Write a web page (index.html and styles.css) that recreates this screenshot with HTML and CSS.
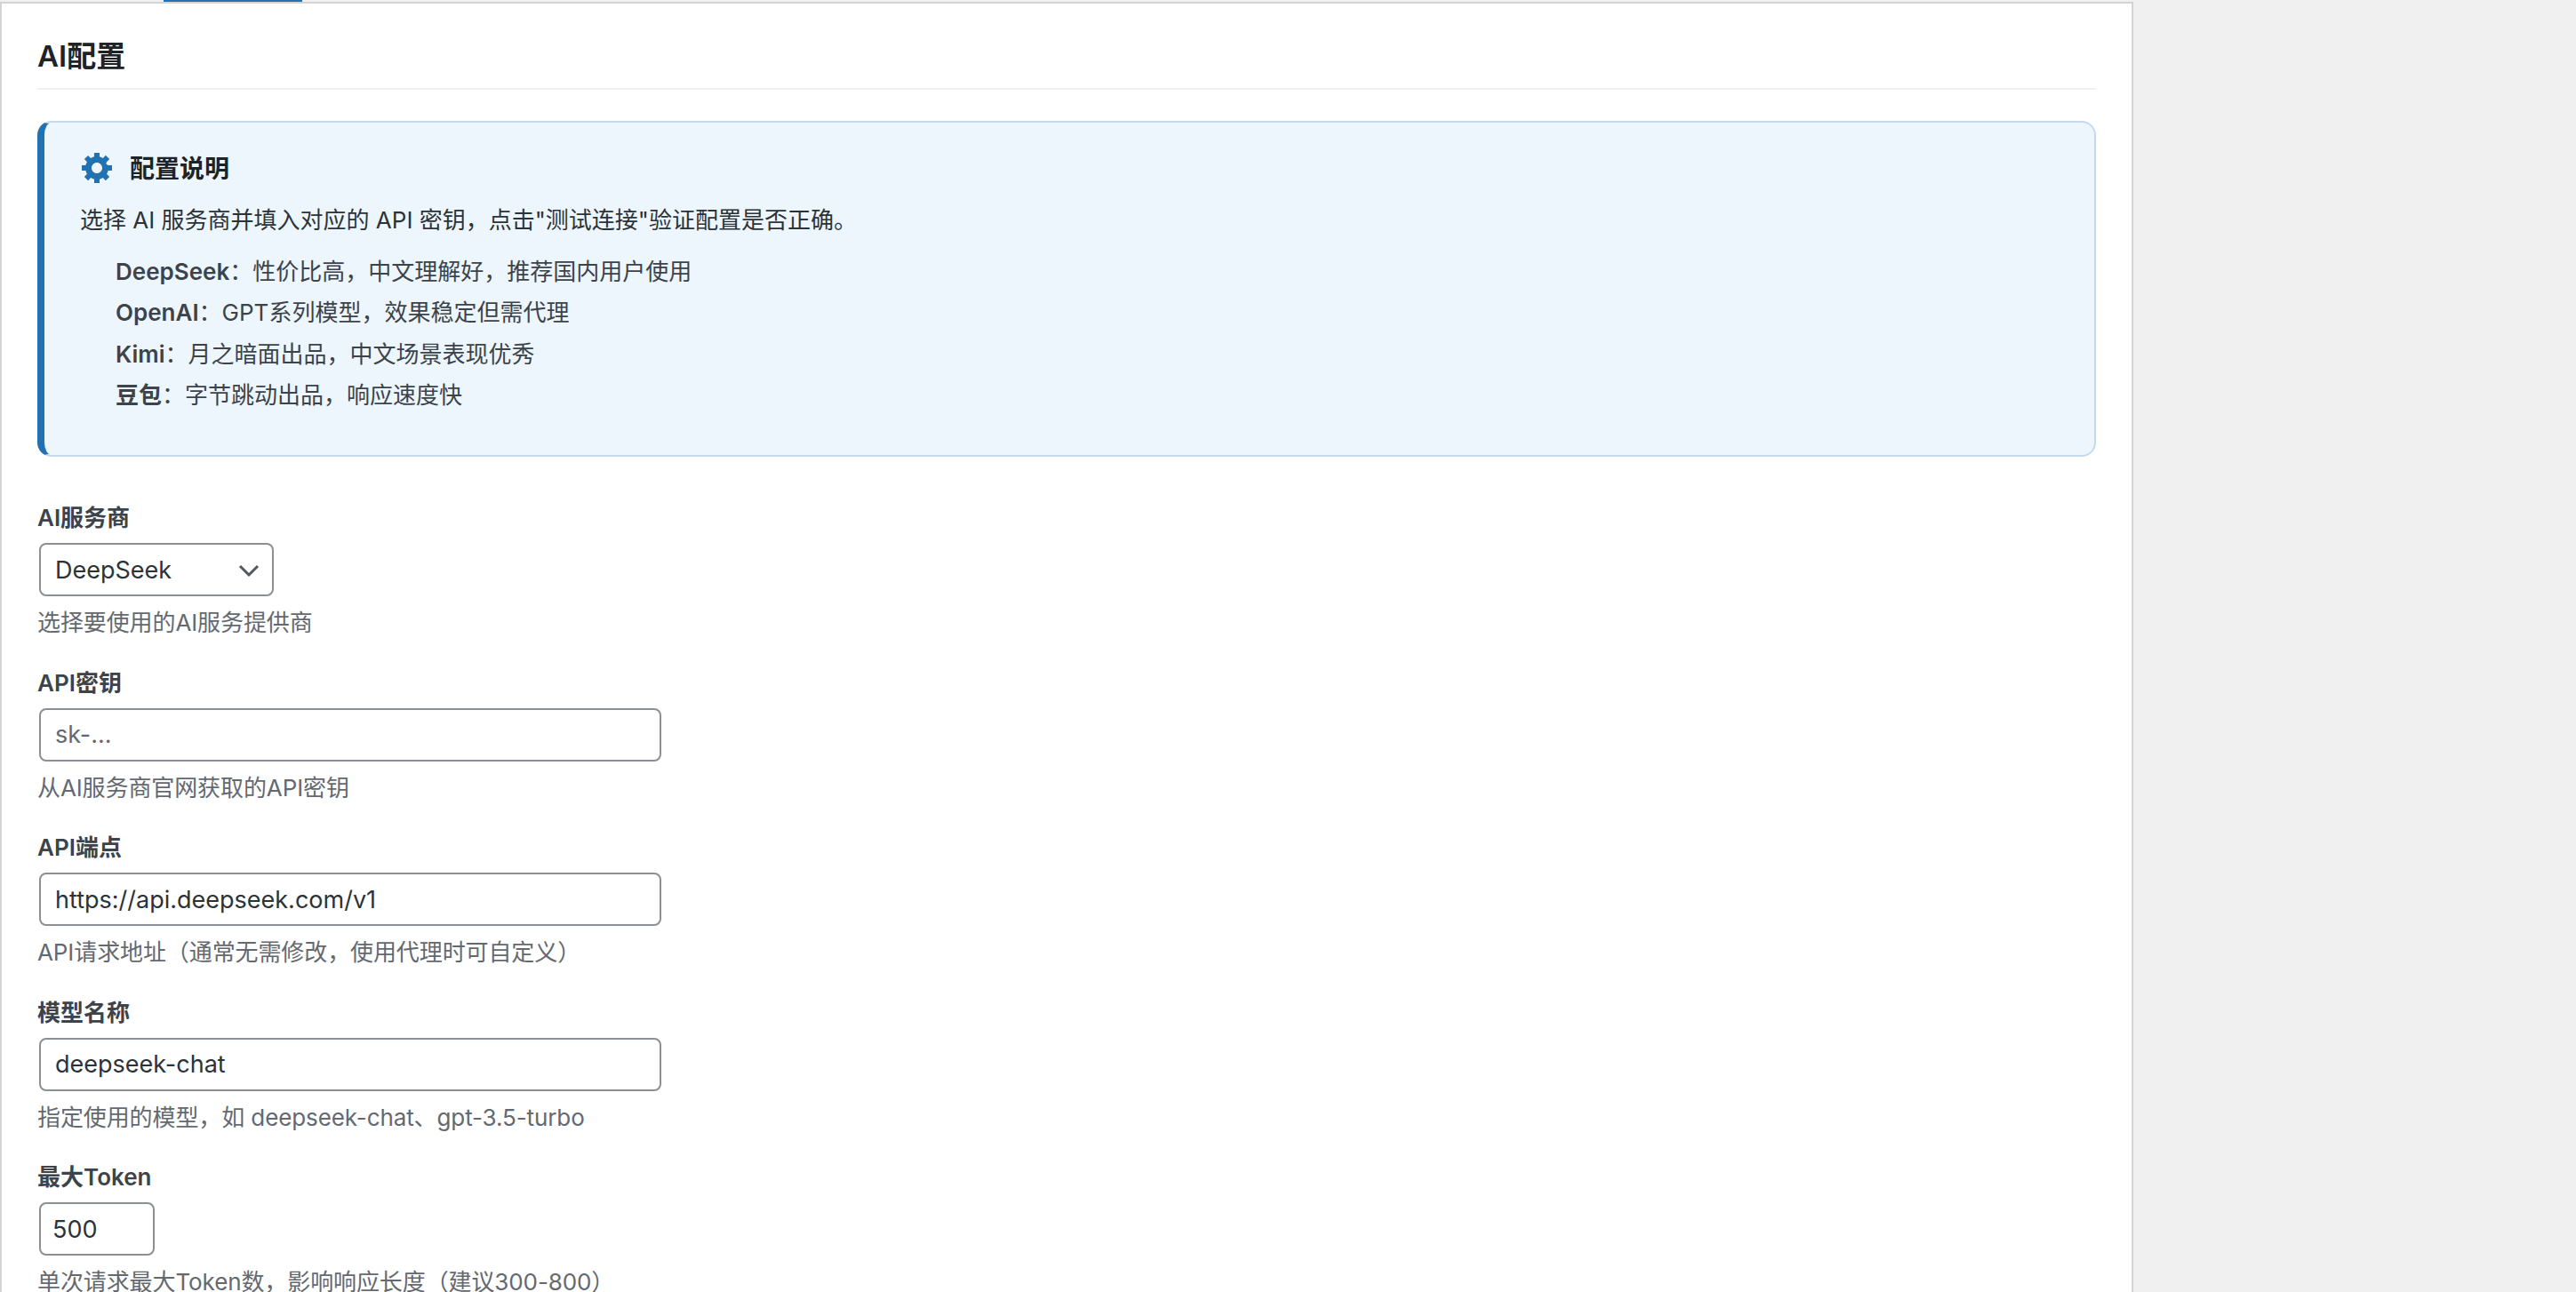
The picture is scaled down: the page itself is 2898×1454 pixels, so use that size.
FILE: index.html
```html
<!DOCTYPE html>
<html lang="zh-CN">
  <head>
    <meta charset="utf-8">
    <title>AI配置</title>
    <link rel="stylesheet" href="styles.css">
  </head>

  <body>
    <div class="tabs">
      <div class="tabactive"></div>
    </div>

    <div class="card">
      <h2 class="cardtitle">AI配置</h2>

      <div class="notice">
        <div class="noticehead">
          <svg class="noticeicon" viewBox="0 0 20 20">
            <path d="M18 12h-2.18c-.17.7-.44 1.35-.81 1.93l1.54 1.54-2.1 2.1-1.54-1.54c-.58.36-1.23.63-1.91.79V19H8v-2.18c-.68-.16-1.33-.43-1.91-.79l-1.54 1.54-2.12-2.12 1.54-1.54c-.36-.58-.63-1.23-.79-1.91H1V9.03h2.17c.16-.7.44-1.35.8-1.94L2.43 5.55l2.1-2.1 1.54 1.54c.58-.37 1.24-.64 1.93-.81V2h3v2.18c.68.16 1.33.43 1.91.79l1.54-1.54 2.12 2.12-1.54 1.54c-.36.59-.64 1.24.8 1.94H18V12zm-8.5 1.5c1.66 0 3-1.34 3-3s-1.34-3-3-3-3 1.34-3 3 1.34 3 3 3z"/>
          </svg>
          <span>配置说明</span>
        </div>
        <p class="noticetext">选择 AI 服务商并填入对应的 API 密钥，点击"测试连接"验证配置是否正确。</p>
        <ul class="noticelist">
          <li><strong>DeepSeek</strong>：性价比高，中文理解好，推荐国内用户使用</li>
          <li><strong>OpenAI</strong>：GPT系列模型，效果稳定但需代理</li>
          <li><strong>Kimi</strong>：月之暗面出品，中文场景表现优秀</li>
          <li><strong>豆包</strong>：字节跳动出品，响应速度快</li>
        </ul>
      </div>

      <div class="field">
        <label class="fieldlabel">AI服务商</label>
        <div class="selectwrap">
          <select class="fieldselect">
            <option>DeepSeek</option>
            <option>OpenAI</option>
            <option>Kimi</option>
            <option>豆包</option>
          </select>
          <svg class="selectarrow" viewBox="0 0 24 16">
            <path d="M2 3l10 10L22 3"/>
          </svg>
        </div>
        <div class="fieldhint">选择要使用的AI服务提供商</div>
      </div>

      <div class="field">
        <label class="fieldlabel">API密钥</label>
        <input class="fieldinput" type="password" placeholder="sk-...">
        <div class="fieldhint">从AI服务商官网获取的API密钥</div>
      </div>

      <div class="field">
        <label class="fieldlabel">API端点</label>
        <input class="fieldinput" type="text" value="https://api.deepseek.com/v1">
        <div class="fieldhint">API请求地址（通常无需修改，使用代理时可自定义）</div>
      </div>

      <div class="field">
        <label class="fieldlabel">模型名称</label>
        <input class="fieldinput" type="text" value="deepseek-chat">
        <div class="fieldhint">指定使用的模型，如 deepseek-chat、gpt-3.5-turbo</div>
      </div>

      <div class="field">
        <label class="fieldlabel">最大Token</label>
        <input class="fieldinput fieldnumber" type="text" value="500">
        <div class="fieldhint">单次请求最大Token数，影响响应长度（建议300-800）</div>
      </div>
    </div>
  </body>
</html>
```

FILE: styles.css
```css
html, body {
  height: 100%;
  overflow: hidden;
}

body {
  margin: 0;
  background-color: #f0f0f1;
  color: #3c434a;
  font-family: Inter, "Noto Sans CJK SC", sans-serif;
  font-size: 26px;
}

.tabs {
  height: 2px;
  padding-left: 184px;
}

.tabactive {
  width: 156px;
  height: 2px;
  background-color: #2271b1;
}

.card {
  width: 2400px;
  box-sizing: border-box;
  background-color: white;
  border: 2px solid #d2d4d6;
  padding: 34px 40px 40px 40px;
}

.cardtitle {
  margin: 0 0 35px 0;
  padding-bottom: 11px;
  border-bottom: 2px solid #f0f0f1;
  color: #1d2327;
  font-size: 33px;
  line-height: 50px;
  font-weight: 600;
}

.notice {
  height: 378px;
  box-sizing: border-box;
  background-color: #eef6fd;
  border: 2px solid #c5d9ed;
  border-left: 8px solid #2271b1;
  border-radius: 16px;
  padding: 30px 40px;
  margin-bottom: 49px;
}

.noticehead {
  display: flex;
  align-items: center;
  gap: 16px;
  color: #1d2327;
  font-size: 28px;
  font-weight: 600;
  height: 40px;
}

.noticeicon {
  width: 40px;
  height: 40px;
  fill: #2271b1;
}

.noticetext {
  margin: 20px 0 0 0;
  line-height: 40px;
  color: #2c3338;
}

.noticelist {
  list-style: none;
  margin: 15px 0 0 0;
  padding: 0 0 0 40px;
}

.noticelist li {
  line-height: 46.4px;
}

.noticelist strong {
  font-weight: 600;
}

.field {
  height: 185.5px;
}

.fieldlabel {
  display: block;
  color: #3c434a;
  font-weight: 600;
  line-height: 40px;
  margin-bottom: 8px;
}

.selectwrap {
  position: relative;
  width: 264px;
  height: 60px;
  margin-left: 2px;
}

.fieldselect {
  appearance: none;
  width: 100%;
  height: 100%;
  box-sizing: border-box;
  background-color: white;
  border: 2px solid #8c8f94;
  border-radius: 8px;
  padding: 0 16px;
  color: #2c3338;
  font-family: inherit;
  font-size: 27px;
}

.selectarrow {
  position: absolute;
  right: 16px;
  top: 23px;
  width: 24px;
  height: 16px;
  fill: none;
  stroke: #50575e;
  stroke-width: 3;
}

.fieldinput {
  display: block;
  width: 700px;
  height: 60px;
  margin-left: 2px;
  box-sizing: border-box;
  background-color: white;
  border: 2px solid #8c8f94;
  border-radius: 8px;
  padding: 0 16px;
  color: #2c3338;
  font-family: inherit;
  font-size: 27px;
}

.fieldinput::placeholder {
  color: #646970;
  opacity: 1;
}

.fieldnumber {
  width: 130px;
  padding: 0 13px;
}

.fieldhint {
  margin-top: 10px;
  color: #646970;
  line-height: 40px;
  letter-spacing: -0.1px;
}
```
